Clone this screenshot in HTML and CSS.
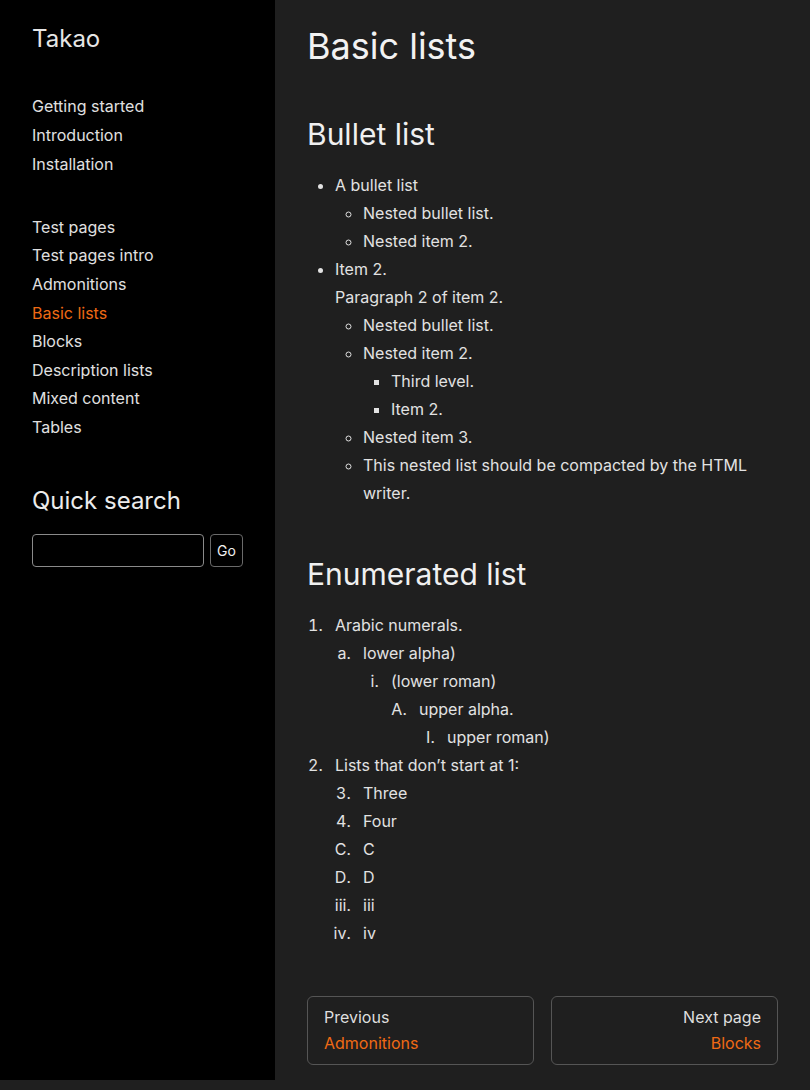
FILE: index.html
```html
<!DOCTYPE html>
<html lang="en">
<head>
<meta charset="utf-8">
<title>Basic lists</title>
<link rel="stylesheet" href="styles.css">
</head>
<body>
<div class="layout">
  <aside class="sidebar">
    <div class="brand">Takao</div>
    <ul class="nav-group first">
      <li><a class="nav-link" href="#">Getting started</a></li>
      <li><a class="nav-link" href="#">Introduction</a></li>
      <li><a class="nav-link" href="#">Installation</a></li>
    </ul>
    <ul class="nav-group">
      <li><a class="nav-link" href="#">Test pages</a></li>
      <li><a class="nav-link" href="#">Test pages intro</a></li>
      <li><a class="nav-link" href="#">Admonitions</a></li>
      <li><a class="nav-link current" href="#">Basic lists</a></li>
      <li><a class="nav-link" href="#">Blocks</a></li>
      <li><a class="nav-link" href="#">Description lists</a></li>
      <li><a class="nav-link" href="#">Mixed content</a></li>
      <li><a class="nav-link" href="#">Tables</a></li>
    </ul>
    <h3 class="search-title">Quick search</h3>
    <form class="search">
      <input class="search-input" type="text" aria-label="search">
      <button class="search-btn" type="button">Go</button>
    </form>
  </aside>
  <main class="main">
    <h1 class="page-title">Basic lists</h1>
    <section class="section">
      <h2 class="section-title">Bullet list</h2>
      <ul class="list">
        <li>A bullet list
          <ul class="list">
            <li>Nested bullet list.</li>
            <li>Nested item 2.</li>
          </ul>
        </li>
        <li>
          <p class="para">Item 2.</p>
          <p class="para">Paragraph 2 of item 2.</p>
          <ul class="list">
            <li>Nested bullet list.</li>
            <li>Nested item 2.
              <ul class="list">
                <li>Third level.</li>
                <li>Item 2.</li>
              </ul>
            </li>
            <li>Nested item 3.</li>
            <li>This nested list should be compacted by the HTML writer.</li>
          </ul>
        </li>
      </ul>
    </section>
    <section class="section">
      <h2 class="section-title">Enumerated list</h2>
      <ol class="list enum decimal">
        <li>Arabic numerals.
          <ol class="list enum lower-alpha">
            <li>lower alpha)
              <ol class="list enum lower-roman">
                <li>(lower roman)
                  <ol class="list enum upper-alpha">
                    <li>upper alpha.
                      <ol class="list enum upper-roman">
                        <li>upper roman)</li>
                      </ol>
                    </li>
                  </ol>
                </li>
              </ol>
            </li>
          </ol>
        </li>
        <li>Lists that don’t start at 1:
          <ol class="list enum decimal" start="3">
            <li>Three</li>
            <li>Four</li>
          </ol>
          <ol class="list enum upper-alpha" start="3">
            <li>C</li>
            <li>D</li>
          </ol>
          <ol class="list enum lower-roman" start="3">
            <li>iii</li>
            <li>iv</li>
          </ol>
        </li>
      </ol>
    </section>
    <nav class="pager">
      <a class="pager-card" href="#">
        <span class="pager-label">Previous</span>
        <span class="pager-link">Admonitions</span>
      </a>
      <a class="pager-card next" href="#">
        <span class="pager-label">Next page</span>
        <span class="pager-link">Blocks</span>
      </a>
    </nav>
  </main>
</div>
</body>
</html>
```
FILE: styles.css
```css
* { box-sizing: border-box; }

body {
  margin: 0;
  background: #1f1f1f;
  color: #e2e2e2;
  font-family: Inter, "Noto Sans", "Liberation Sans", sans-serif;
  font-size: 16px;
}

.layout {
  display: flex;
  align-items: stretch;
}

.sidebar {
  width: 275px;
  flex: none;
  background: #000;
  padding: 25px 32px 0;
}

.brand {
  font-size: 24px;
  line-height: 28.8px;
  color: #e6e6e6;
}

.nav-group {
  list-style: none;
  margin: 38px 0 0;
  padding: 0;
}

.nav-group li {
  line-height: 28.6px;
}

.nav-group.first li {
  line-height: 29px;
}

.nav-group + .nav-group {
  margin-top: 34px;
}

.nav-link {
  color: #e0e0e0;
  text-decoration: none;
}

.nav-link.current {
  color: #ef6a14;
}

.search-title {
  margin: 45px 0 0;
  font-size: 24px;
  font-weight: 400;
  line-height: 28.8px;
  color: #ececec;
}

.search {
  display: flex;
  gap: 6px;
  margin-top: 19px;
}

.search-input {
  width: 172px;
  height: 33px;
  background: #000;
  border: 1px solid #8a8a8a;
  border-radius: 4px;
  color: #fff;
  padding: 0 6px;
  font: inherit;
}

.search-btn {
  width: 33px;
  height: 33px;
  padding: 0;
  background: #000;
  border: 1px solid #6a6a6a;
  border-radius: 4px;
  color: #f0f0f0;
  font-family: Inter, "Noto Sans", sans-serif;
  font-size: 14px;
}

.main {
  flex: 1;
  min-width: 0;
  padding: 25px 32px 15px;
}

.page-title {
  margin: 0;
  font-size: 36px;
  font-weight: 400;
  line-height: 43.2px;
  color: #f2f2f2;
}

.section-title {
  margin: 48px 0 19px;
  font-size: 30px;
  font-weight: 400;
  line-height: 36px;
  color: #f0f0f0;
}

.section + .section .section-title {
  margin-top: 49px;
}

.list {
  margin: 0;
  padding-left: 28px;
  line-height: 28px;
}

.para {
  margin: 0;
}

.enum.decimal > li::marker {
  content: counter(list-item) ".\00a0\2002";
}

.enum.lower-alpha > li::marker {
  content: counter(list-item, lower-alpha) ".\00a0\2002";
}

.enum.lower-roman > li::marker {
  content: counter(list-item, lower-roman) ".\00a0\2002";
}

.enum.upper-alpha > li::marker {
  content: counter(list-item, upper-alpha) ".\00a0\2002";
}

.enum.upper-roman > li::marker {
  content: counter(list-item, upper-roman) ".\00a0\2002";
}

.pager {
  display: flex;
  gap: 17px;
  margin-top: 49px;
}

.pager-card {
  flex: 1;
  display: flex;
  flex-direction: column;
  border: 1px solid #555;
  border-radius: 6px;
  padding: 7px 16px 8px;
  line-height: 26px;
  text-decoration: none;
}

.pager-card.next {
  align-items: flex-end;
}

.pager-label {
  color: #dedede;
}

.pager-link {
  color: #ef6a14;
}
```
